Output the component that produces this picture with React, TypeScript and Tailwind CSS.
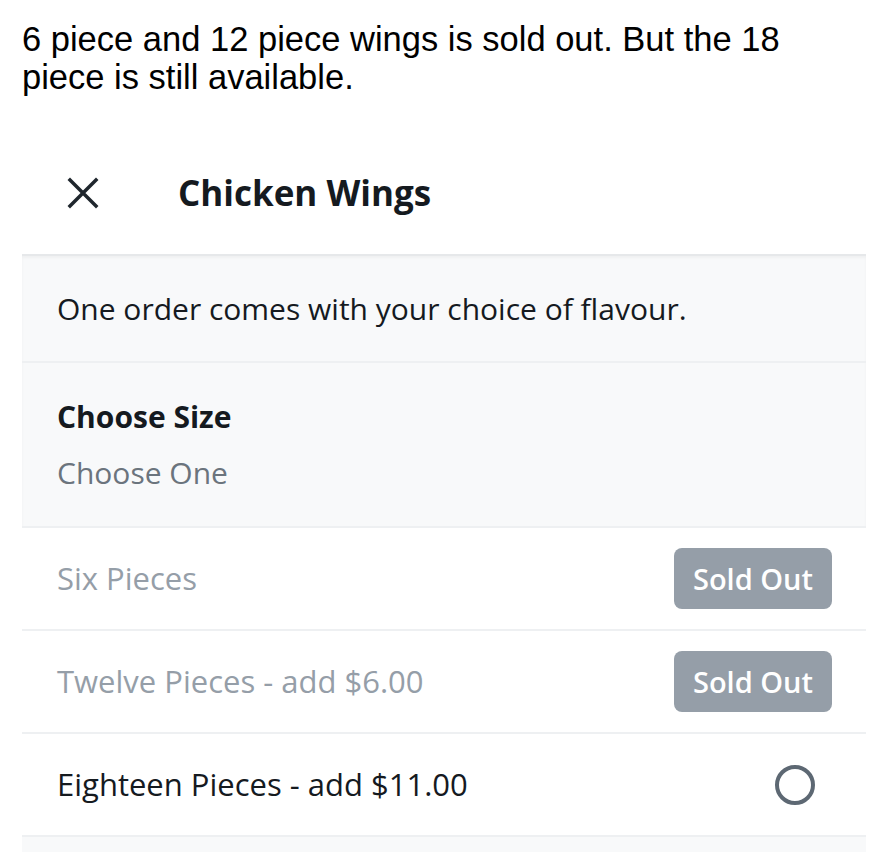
import React from "react";

const appFont = { fontFamily: "'Open Sans', 'Noto Sans', sans-serif" };

function Row({ label, soldOut }: { label: string; soldOut: boolean }) {
  return (
    <div className="flex h-[103px] items-center justify-between border-b-2 border-[#eef0f2] bg-white pl-[35px] pr-[34px]">
      <span className={`text-[31px] ${soldOut ? "text-[#959ea8]" : "text-[#151a1f]"}`}>{label}</span>
      {soldOut ? (
        <span className="flex h-[61px] w-[158px] items-center justify-center rounded-[8px] bg-[#959ea8] text-[29px] font-semibold text-white">
          Sold Out
        </span>
      ) : (
        <span className="mr-[17px] block h-[40px] w-[40px] rounded-full border-[4px] border-[#5d6873]" />
      )}
    </div>
  );
}

export default function App() {
  return (
    <div className="h-[852px] w-[882px] overflow-hidden bg-white">
      <p
        className="pl-[22px] pt-[20px] text-[34.5px] leading-[38px] text-black"
        style={{ fontFamily: "'Liberation Sans', Arial, sans-serif" }}
      >
        6 piece and 12 piece wings is sold out. But the 18
        <br />
        piece is still available.
      </p>
      <div className="ml-[22px] mt-[28px] w-[844px]" style={appFont}>
        <div className="flex h-[130px] items-center pl-[45px] pt-[8px]">
          <svg width="32" height="32" viewBox="0 0 32 32" fill="none" stroke="#1f262d" strokeWidth="3.5" strokeLinecap="square">
            <path d="M3 3 L29 29 M29 3 L3 29" />
          </svg>
          <h1 className="ml-[79px] text-[35px] font-bold text-[#151a1f]">Chicken Wings</h1>
        </div>
        <div className="border-t-2 border-[#e6e8ea] shadow-[inset_0_2px_3px_rgba(0,0,0,0.04)] bg-[#f8f9fa]">
          <div className="flex h-[107px] items-center border-b-2 border-[#eef0f2] pl-[35px] text-[30px] text-[#151a1f]">
            One order comes with your choice of flavour.
          </div>
          <div className="flex h-[165px] flex-col justify-center border-b-2 border-[#eef0f2] pl-[35px]">
            <div className="text-[30px] font-bold leading-[34px] text-[#151a1f]">Choose Size</div>
            <div className="mt-[22px] text-[30px] leading-[34px] text-[#6b747d]">Choose One</div>
          </div>
        </div>
        <Row label="Six Pieces" soldOut />
        <Row label="Twelve Pieces - add $6.00" soldOut />
        <Row label="Eighteen Pieces - add $11.00" soldOut={false} />
        <div className="h-[40px] bg-[#f8f9fa]" />
      </div>
    </div>
  );
}
